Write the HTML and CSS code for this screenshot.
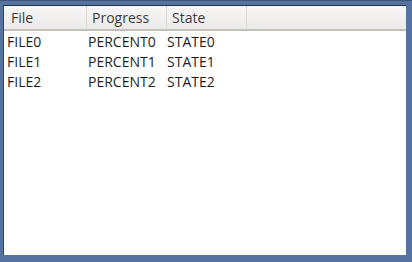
FILE: index.html
```html
<!DOCTYPE html>
<html>
<head>
<meta charset="utf-8">
<link rel="stylesheet" href="styles.css">
</head>
<body>
<div class="frame">
  <div class="table">
    <div class="head">
      <div class="hcell c1">File</div>
      <div class="hcell c2">Progress</div>
      <div class="hcell c3">State</div>
      <div class="hcell c4"></div>
    </div>
    <div class="rows">
      <div class="row"><span class="c1">FILE0</span><span class="c2">PERCENT0</span><span class="c3">STATE0</span></div>
      <div class="row"><span class="c1">FILE1</span><span class="c2">PERCENT1</span><span class="c3">STATE1</span></div>
      <div class="row"><span class="c1">FILE2</span><span class="c2">PERCENT2</span><span class="c3">STATE2</span></div>
    </div>
  </div>
</div>
</body>
</html>
```
FILE: styles.css
```css
html, body {
  margin: 0;
  padding: 0;
  width: 412px;
  height: 262px;
  overflow: hidden;
  background: #4f6a94;
}
.frame {
  box-sizing: border-box;
  width: 412px;
  height: 262px;
  padding: 4px 6px 7px 3px;
  background: #5673a0;
  border-top: 1px solid #3c557c;
}
.table {
  box-sizing: border-box;
  height: 100%;
  background: #ffffff;
  border-left: 1px solid #2f4468;
  border-top: 1px solid #22324e;
  display: flex;
  flex-direction: column;
  font-family: "Open Sans", "DejaVu Sans", sans-serif;
  font-size: 14px;
}
.head {
  display: flex;
  height: 23px;
  background: linear-gradient(#f6f6f5, #ebeae8);
  border-bottom: 2px solid #c3bfb8;
}
.hcell {
  box-sizing: border-box;
  display: flex;
  align-items: center;
  padding-left: 7px;
  color: #3c3c3c;
  border-right: 1px solid #dcdad6;
}
.hcell.c1 { width: 83px; }
.hcell.c2 { width: 80px; padding-left: 5px; }
.hcell.c3 { width: 80px; padding-left: 5px; }
.hcell.c4 { flex: 1; border-right: none; }
.rows {
  padding-top: 0;
}
.row {
  display: flex;
  height: 20px;
  align-items: center;
  color: #1e1e1e;
}
.row span { box-sizing: border-box; padding-left: 3px; }
.row .c1 { width: 83px; }
.row .c2 { width: 80px; padding-left: 1px; }
.row .c3 { width: 80px; padding-left: 0; }
```
